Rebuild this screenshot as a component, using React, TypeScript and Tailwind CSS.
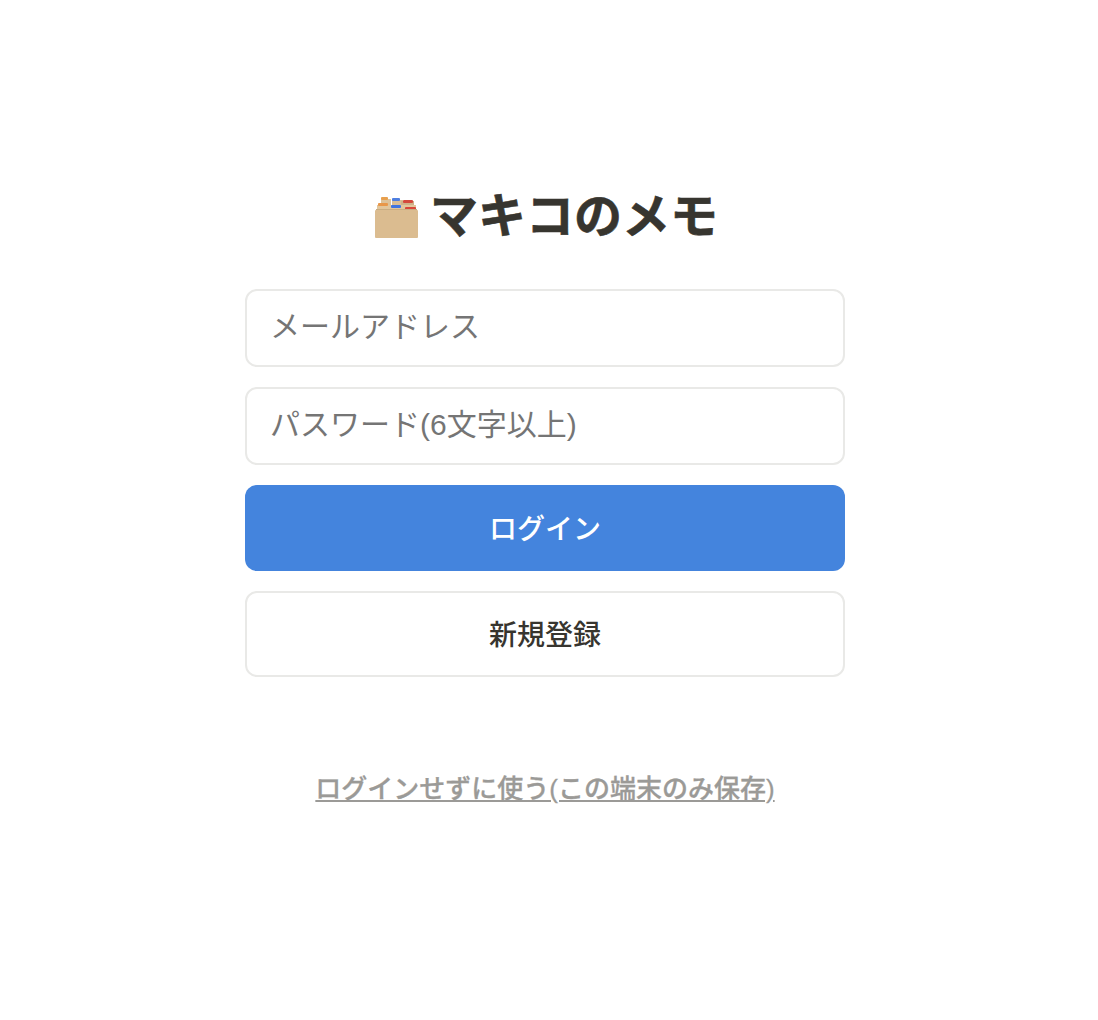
export default function App() {
  const font = "font-['Liberation_Sans','Noto_Sans_CJK_JP',sans-serif]";
  return (
    <div className={`min-h-[1020px] bg-white ${font} flex justify-center`}>
      <div className="w-[600px] ml-[-8px] pt-[184px] flex flex-col">
        <div className="flex items-center justify-center gap-[11px] h-[65px] mb-[40px]">
          <svg width="46" height="44" viewBox="0 0 46 44" className="ml-[1px] mt-[1px]">
            <rect x="8" y="4" width="10" height="8" fill="#ddc29a" />
            <rect x="8" y="2" width="7" height="3" rx="1" fill="#e8a04e" />
            <rect x="19" y="5" width="11" height="7" fill="#d9bd94" />
            <rect x="19" y="3" width="8" height="3" rx="1" fill="#4f7fe0" />
            <rect x="28" y="6" width="13" height="8" fill="#cfb288" />
            <rect x="30" y="5" width="10" height="3" rx="1" fill="#d4483c" />
            <rect x="4" y="10" width="39" height="6" fill="#e2c69c" />
            <rect x="5" y="8" width="10" height="3" rx="1" fill="#e8974a" />
            <rect x="18" y="10" width="10" height="3" rx="1" fill="#3f74e0" />
            <rect x="32" y="12" width="11" height="3" rx="1" fill="#d8473a" />
            <rect x="3" y="14" width="41" height="2" fill="#c9ad83" />
            <rect x="2" y="15" width="43" height="28" rx="1" fill="#dbbc90" />
          </svg>
          <h1 className="text-[48px] leading-[65px] font-bold text-[#37352f] [-webkit-text-stroke:0.6px_#37352f]">マキコのメモ</h1>
        </div>
        <div className="flex flex-col gap-[20px]">
          <input placeholder="メールアドレス" className="h-[78px] rounded-[12px] border-2 border-[#e9e9e7] pl-[23px] pr-[24px] pb-[2px] text-[30px] text-[#37352f] placeholder:text-[#757575] outline-none" />
          <input placeholder="パスワード(6文字以上)" className="h-[78px] rounded-[12px] border-2 border-[#e9e9e7] pl-[23px] pr-[24px] pb-[2px] text-[30px] text-[#37352f] placeholder:text-[#757575] outline-none" />
          <button className="h-[86px] rounded-[12px] bg-[#4484dd] pt-[3px] text-white text-[28px] font-medium">ログイン</button>
          <button className="h-[86px] rounded-[12px] border-2 border-[#e9e9e7] bg-white pt-[4px] text-[#37352f] text-[28px] font-medium">新規登録</button>
        </div>
        <a className="mt-[93px] text-center text-[26px] font-medium text-[#9b9a97] underline [-webkit-text-stroke:0.3px_#9b9a97]">ログインせずに使う(この端末のみ保存)</a>
      </div>
    </div>
  );
}
